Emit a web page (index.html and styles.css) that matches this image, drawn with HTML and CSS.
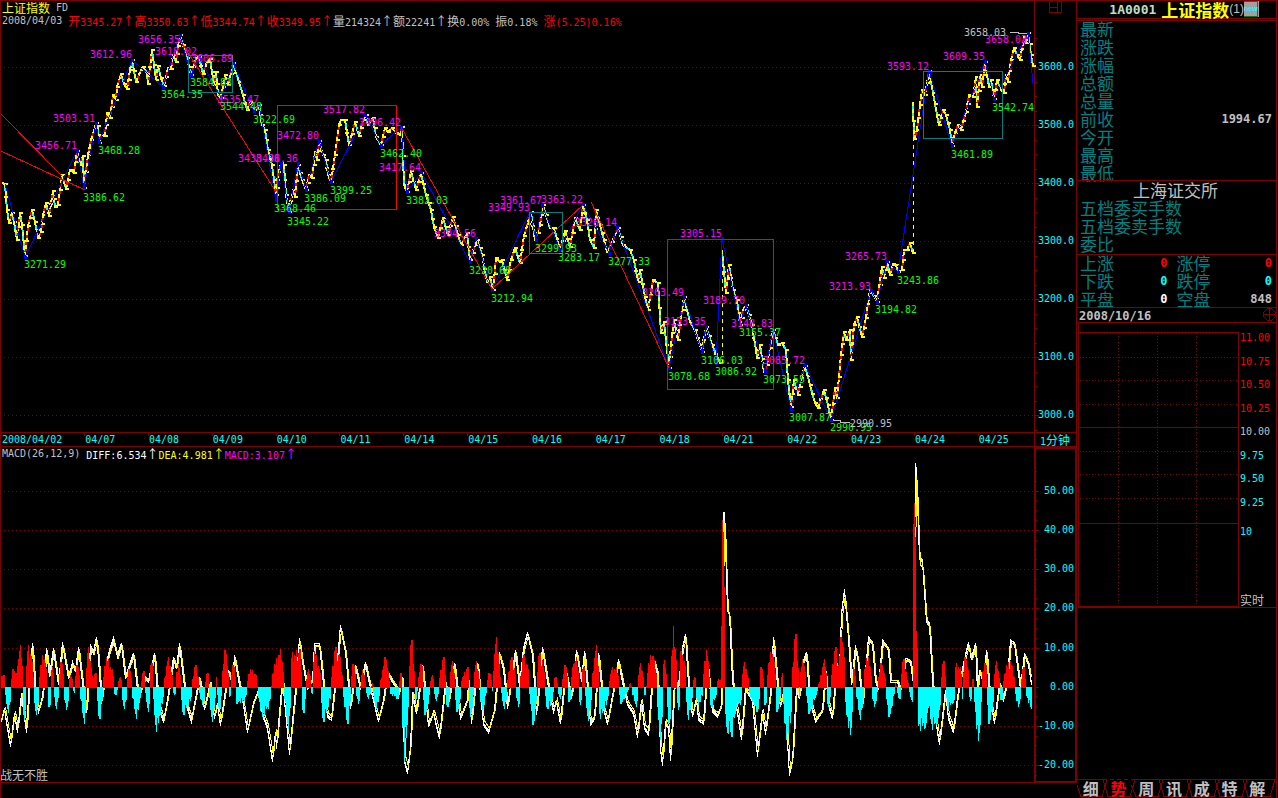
FILE: index.html
```html
<!DOCTYPE html>
<html lang="zh-CN">
<head>
  <meta charset="UTF-8">
  <meta name="viewport" content="width=device-width, initial-scale=1.0">
  <title>上证指数</title>
  <link rel="stylesheet" href="styles.css">
</head>
<body>
  <div class="app">
    <main class="charts">
      <header class="chart-head">
        <div class="info">
          <div class="line"><span class="yellow">上证指数</span><span class="num space">FD</span></div>
          <div class="line">
            <span class="num date">2008/04/03</span>
            <span class="red">开<b class="num">3345.27</b>↑高<b class="num">3350.63</b>↑低<b class="num">3344.74</b>↑收<b class="num">3349.95</b>↑</span>
            <span>量<b class="num">214324</b>↑额<b class="num">22241</b>↑换<b class="num">0.00%</b></span>
            <span class="space">振<b class="num">0.18%</b></span>
            <span class="red space">涨<b class="num">(5.25)0.16%</b></span>
          </div>
        </div>
        <div class="corner">
          <svg class="layout-icon" width="13" height="12" viewBox="0 0 13 12">
            <path d="M0.5 0V11.5H12.5V0.5H8.5V11M0 6.5H8M0 0.5H4"/>
          </svg>
        </div>
      </header>

      <svg id="price" class="chart" viewBox="1 28 1076 404"></svg>

      <div class="dates">
        <ol id="dateList"></ol>
        <div class="period"><span class="num">1</span>分钟</div>
      </div>

      <div class="legend">
        <div class="line">
          <span class="num">MACD(26,12,9)</span>
          <span class="white space"><b class="num">DIFF:6.534</b>↑</span>
          <span class="yellow"><b class="num">DEA:4.981</b>↑</span>
          <span class="magenta"><b class="num">MACD:3.107</b>↑</span>
        </div>
        <div class="legend-axis"></div>
      </div>

      <svg id="macd" class="chart" viewBox="1 461 1076 322"></svg>
    </main>

    <aside class="side">
      <h1 class="stock">
        <span class="code">1A0001</span>
        <span class="yellow">上证指数</span><span class="code-no">(1)</span>
        <svg width="15" height="16" viewBox="0 0 15 16">
          <path class="ic-face" d="M0 0H15V16H0Z"/>
          <path class="ic-edge" d="M0 0.5H14M13.5 0V15.5H0"/>
          <text class="ic-new" x="0" y="10">new</text>
        </svg>
      </h1>
      <dl class="quotes">
        <dt>最新</dt><dd></dd>
        <dt>涨跌</dt><dd></dd>
        <dt>涨幅</dt><dd></dd>
        <dt>总额</dt><dd></dd>
        <dt>总量</dt><dd></dd>
        <dt>前收</dt><dd>1994.67</dd>
        <dt>今开</dt><dd></dd>
        <dt>最高</dt><dd></dd>
        <dt>最低</dt><dd></dd>
      </dl>
      <section class="orders">
        <h2>上海证交所</h2>
        <p>五档委买手数</p>
        <p>五档委卖手数</p>
        <p>委比</p>
      </section>
      <dl class="breadth">
        <dt>上涨</dt><dd class="red">0</dd><dt>涨停</dt><dd class="red">0</dd>
        <dt>下跌</dt><dd class="cyan">0</dd><dt>跌停</dt><dd class="cyan">0</dd>
        <dt>平盘</dt><dd class="white">0</dd><dt>空盘</dt><dd>848</dd>
      </dl>
      <div class="day">
        <span>2008/10/16</span>
        <svg width="13" height="13" viewBox="0 0 13 13">
          <path d="M4.500 0.500H8.500L12.500 4.500V8.500L8.500 12.500H4.500L0.500 8.500V4.500ZM6.500 0V13M0 6.500H13"/>
        </svg>
      </div>
      <svg id="mini" class="mini" viewBox="1077 323 199 285"></svg>
      <div class="filler"></div>
      <nav class="tabs">
        <svg class="tab-lines" viewBox="0 0 199 19" preserveAspectRatio="none">
          <path d="M0 0.500H26M56 0.500H199"/>
          <path class="dashed" d="M26 0.500H56"/>
          <path d="M0 6L4 17.500H25L30 1M26 1L31 17.500H53L58 1M54 6L59 17.500H81L86 1M82 1L87 17.500H109L114 1M110 1L115 17.500H137L142 1M138 1L143 17.500H165L170 1M166 1L171 17.500H193L198 1"/>
        </svg>
        <button>细</button>
        <button class="active">势</button>
        <button>周</button>
        <button>讯</button>
        <button>成</button>
        <button>特</button>
        <button>解</button>
      </nav>
    </aside>
  </div>
  <script src="script.js"></script>
</body>
</html>
```

FILE: styles.css
```css
* {
  box-sizing: border-box;
}

body {
  margin: 0;
  background: #000;
  color: #c0c0c0;
  font-family: "Noto Sans CJK SC", sans-serif;
  font-size: 12px;
  line-height: 13px;
}

.app {
  display: grid;
  grid-template-columns: 1fr 201px;
  min-height: 100vh;
}

/* Colors */
.red { color: #ff0000; }
.yellow { color: #ffff00; }
.cyan { color: #00ffff; }
.magenta { color: #ff00ff; }
.white { color: #ffffff; }

.num {
  font-family: "DejaVu Sans Mono", monospace;
  font-size: 10px;
  font-weight: normal;
}

.space {
  margin-left: 6px;
}

/* Charts */
.charts {
  border-left: 1px solid #800000;
  border-top: 1px solid #800000;
}

.chart-head,
.dates,
.legend {
  display: grid;
  grid-template-columns: 1033fr 43fr;
}

.info {
  height: 27px;
  padding-left: 1px;
}

.line {
  display: flex;
  white-space: nowrap;
  height: 13px;
  line-height: 13px;
}

.date {
  margin-right: 6px;
}

.corner,
.legend-axis {
  border-left: 1px solid #800000;
  border-right: 1px solid #800000;
}

.legend-axis {
  border-width: 2px;
  border-top: 2px solid #800000;
}

.layout-icon {
  display: block;
  margin-left: 14px;
}

.layout-icon path,
.day path,
.tab-lines path {
  fill: none;
  stroke: #800000;
  shape-rendering: crispEdges;
}

.chart,
.mini {
  display: block;
  width: 100%;
  height: auto;
}

.dates {
  border-top: 1px solid #800000;
  border-bottom: 1px solid #800000;
  height: 15px;
  color: #00ffff;
}

.dates ol {
  display: grid;
  grid-template-columns: 8.05% repeat(14, 6.18%) 1fr;
  margin: 0;
  padding: 0;
  list-style: none;
}

.dates li {
  padding-left: 1px;
  font-family: "DejaVu Sans Mono", monospace;
  font-size: 10px;
  white-space: nowrap;
  background: linear-gradient(#800000, #800000) 0 0 / 1px 3px no-repeat;
}

.period {
  padding-left: 5px;
  white-space: nowrap;
  border-left: 1px solid #800000;
  border-right: 1px solid #800000;
}

.legend {
  height: 14px;
}

.legend .line {
  padding-left: 1px;
}

/* Chart drawing */
svg path,
svg line,
svg rect,
svg polyline {
  fill: none;
  shape-rendering: crispEdges;
}

svg text {
  font-family: "DejaVu Sans Mono", "Noto Sans CJK SC", monospace;
  font-size: 10px;
}

svg .note {
  font-family: "Noto Sans CJK SC", sans-serif;
  font-size: 12px;
}

.s-frame { stroke: #800000; }
.s-thick { stroke: #800000; stroke-width: 2; }
.s-grid { stroke: #800000; stroke-dasharray: 1 3; }
.s-dots { stroke: #800000; stroke-dasharray: 1 2; }
.s-trend { stroke: #ff0000; }
.s-box { stroke: #008080; }
.s-wave { stroke: #0000ff; }
.s-up { stroke: #ff0000; stroke-width: 2; }
.s-down { stroke: #00ffff; stroke-width: 2; }
.s-tick { stroke: #ffff00; stroke-width: 2; stroke-dasharray: 4 3; }
.s-cap { stroke: #ffff00; stroke-width: 2; }
.s-gap { stroke: #ffff00; stroke-dasharray: 4 4; }
.s-node { stroke: #0000ff; stroke-width: 3; }
.s-lead { stroke: #c0c0c0; }
.s-diff { stroke: #ffffff; }
.s-dea { stroke: #ffff00; }
.s-plus { stroke: #ff0000; }
.s-minus { stroke: #00ffff; }

.t-high { fill: #ff00ff; }
.t-low { fill: #00ff00; }
.t-axis { fill: #00ffff; }
.t-red { fill: #ff0000; }
.t-plain { fill: #c0c0c0; }

/* Side panel */
.side {
  display: flex;
  flex-direction: column;
  margin-right: 1px;
  border-top: 1px solid #800000;
  border-right: 1px solid #800000;
  font-size: 17px;
  line-height: 18px;
}

.side h1,
.side h2,
.side p,
.side dl,
.side dd {
  margin: 0;
  font-size: 17px;
  font-weight: normal;
}

.side dt,
.side p {
  color: #008080;
  white-space: nowrap;
}

.side .stock {
  display: flex;
  justify-content: flex-end;
  height: 20px;
  padding-right: 17px;
  line-height: 17px;
  font-weight: bold;
  border-bottom: 3px double #800000;
}

.code {
  margin-right: 5px;
  font-family: "DejaVu Sans Mono", monospace;
  font-size: 13px;
  color: #c0dcc0;
}

.code-no {
  font-family: "Liberation Sans", sans-serif;
  font-size: 12px;
  font-weight: normal;
}

.stock .ic-face { fill: #a0a0a4; }
.stock .ic-edge { stroke: #008000; }

.stock .ic-new {
  fill: #00ffff;
  font-family: "Liberation Sans", sans-serif;
  font-size: 7px;
  font-weight: bold;
}

.quotes {
  display: grid;
  grid-template-columns: auto 1fr;
  grid-auto-rows: 18px;
  height: 159px;
  padding: 0 4px 0 3px;
}

.quotes dt {
  line-height: 15px;
}

.quotes dd {
  line-height: 17px;
}

.side dd,
.day {
  font-family: "DejaVu Sans Mono", monospace;
  font-size: 12px;
  font-weight: bold;
}

.side dd {
  text-align: right;
}

.orders {
  height: 74px;
  padding-left: 3px;
  border-top: 1px solid #800000;
}

.orders h2 {
  padding-right: 5px;
  line-height: 18px;
  text-align: center;
}

.orders p {
  line-height: 18px;
}

.breadth {
  display: grid;
  grid-template-columns: 34px 1fr 43px 1fr;
  grid-auto-rows: 18px;
  height: 53px;
  padding: 0 4px 0 3px;
  line-height: 17px;
  border-top: 1px solid #800000;
}

.breadth dt {
  line-height: 15px;
}

.breadth dt:nth-of-type(even) {
  padding-left: 5px;
}

.breadth dd:nth-of-type(odd) {
  padding-right: 4px;
}

.day {
  display: flex;
  justify-content: space-between;
  height: 16px;
  padding-left: 2px;
  line-height: 16px;
  border-top: 1px solid #800000;
  border-bottom: 1px solid #800000;
}

.filler {
  flex: 1;
}

.tabs {
  position: relative;
  display: flex;
  height: 19px;
  padding-right: 5px;
}

.tab-lines {
  position: absolute;
  width: 199px;
  height: 19px;
}

.tab-lines .dashed {
  stroke-dasharray: 4 3;
}

.tabs button {
  position: relative;
  flex: 1;
  padding: 0;
  border: none;
  background: none;
  color: #c0c0c0;
  font-family: inherit;
  font-size: 16px;
  font-weight: bold;
  line-height: 17px;
  cursor: pointer;
}

.tabs .active {
  color: #ff0000;
}
```

FILE: script.js
```js
const NS = "http://www.w3.org/2000/svg";
const price = document.getElementById("price");
const macd = document.getElementById("macd");
const mini = document.getElementById("mini");

function add(svg, tag, cls, attrs, text) {
  const el = document.createElementNS(NS, tag);
  el.setAttribute("class", cls);
  for (const key in attrs) el.setAttribute(key, attrs[key]);
  if (text) el.textContent = text;
  svg.appendChild(el);
}

function path(svg, cls, d) {
  add(svg, "path", cls, { d: d });
}

function hline(svg, cls, x1, x2, y) {
  path(svg, cls, `M${x1} ${y + 0.5}H${x2}`);
}

function vline(svg, cls, x, y1, y2) {
  path(svg, cls, `M${x + 0.5} ${y1}V${y2}`);
}

function label(svg, cls, x, y, text, anchor) {
  add(svg, "text", cls, { x: x, y: y + 4, "text-anchor": anchor || "start" }, text);
}

function parse(str) {
  return str.trim().split(/\s+/).map(p => p.split(",").map(Number));
}

// dates
["2008/04/02", "04/07", "04/08", "04/09", "04/10", "04/11", "04/14", "04/15", "04/16",
 "04/17", "04/18", "04/21", "04/22", "04/23", "04/24", "04/25"].forEach(d => {
  const li = document.createElement("li");
  li.textContent = d;
  document.getElementById("dateList").appendChild(li);
});

// price grid and axis
for (let i = 0; i < 7; i++) {
  const y = 67 + i * 58;
  hline(price, "s-grid", 4, 1034, y);
  hline(price, "s-frame", 1034, 1039, y);
  label(price, "t-axis", 1074, y - 1, (3600 - i * 100) + ".0", "end");
}
for (let y = 38; y < 430; y += 14.5) {
  hline(price, "s-frame", 1035, 1037, Math.round(y));
}
vline(price, "s-frame", 1034, 28, 432);
vline(price, "s-frame", 1076, 28, 432);

const ticks = parse(`
2,183 5,184 7,210 9,223 12,213 14,222 17,240 20,213 22,225 25,256 28,226 32,210 35,222 38,238 41,232 43,215
46,203 49,216 53,191 55,207 58,205 62,175 66,189 70,170 74,173 77,151 80,165 83,156 84,188 88,155 91,140
95,128 96,123 98,126 99,143 101,135 105,136 107,113 110,118 113,95 116,100 117,87 121,74 124,84 127,89
130,70 132,60 136,82 141,70 143,67 147,73 148,84 152,50 156,80 158,66 161,78 164,86 168,68 171,69 173,55
176,62 178,46 180,35 183,45 187,58 191,75 196,58 199,57 203,74 207,62 210,59 214,85 216,72 218,95 221,98
225,75 228,85 233,63 239,82 243,95 247,110 250,102 254,110 259,105 262,125 265,130 268,150 272,165 276,195
277,180 281,163 284,165 286,195 289,212 293,190 295,197 298,165 302,180 306,190 309,175 312,178 315,152
317,160 319,141 323,155 326,160 328,175 331,182 335,155 339,125 341,120 345,120 349,145 355,122 359,136
363,120 366,115 368,125 373,118 376,137 381,145 385,128 388,132 392,128 396,133 400,135 402,127 404,185
407,192 411,171 416,190 421,173 426,195 431,210 434,227 438,238 443,218 448,235 453,217 458,235 461,245
467,233 470,260 475,245 477,240 482,255 487,282 490,277 493,290 496,258 500,262 502,260 507,280 511,260
515,248 520,263 524,236 531,212 535,240 540,225 543,205 546,215 550,228 554,228 560,250 565,231 570,247
575,218 580,230 583,205 587,220 590,240 594,248 596,210 600,225 604,240 607,252 612,242 618,228 623,245
630,250 634,260 638,282 640,270 645,297 648,310 653,280 658,283 661,333 664,322 669,368 671,345 674,320
678,340 682,310 684,297 690,322 695,330 700,345 702,352 706,327 712,345 720,363 722,250 726,293 729,265
733,290 737,300 740,325 743,310 746,305 752,325 756,350 757,358 760,345 764,372 767,365 773,330 778,345
782,343 786,350 788,380 791,407 794,380 798,395 801,378 805,366 810,385 815,403 818,408 824,390 828,405
831,420 835,388 837,398 841,355 844,332 846,340 850,330 851,360 854,325 857,317 862,337 866,318 870,290
874,296 877,302 882,267 884,278 887,262 890,275 893,264 896,265 898,272 902,270 904,250 907,250 910,243
913,253 913,102 914,139 917,130 920,105 922,90 925,95 929,71 933,93 937,115 939,125 943,110 946,115
950,130 952,146 955,133 958,125 961,130 966,112 969,95 973,97 976,77 977,107 980,75 982,87 985,62 989,87
991,80 994,99 997,80 1001,90 1004,93 1006,75 1008,82 1011,60 1014,48 1017,55 1020,60 1024,37 1026,43
1028,33 1031,55 1033,66`);

const wave = parse(`
5,184 25,257 77,151 84,188 96,123 99,142 132,60 163,87 180,35 191,75 199,57 221,98 233,63 254,111 259,105
276,200 281,163 289,212 298,163 306,190 319,141 331,182 365,115 381,145 401,127 407,192 421,172 470,262
476,238 492,290 530,212 536,240 542,205 560,250 583,204 609,253 617,227 669,368 684,297 702,352 706,326
716,363 722,238 740,324 746,305 765,371 773,330 791,409 805,365 831,420 871,290 877,302 887,261 898,272
929,71 952,146 985,61 994,99 1028,33 1033,83`);

// price ticks
for (let i = 1; i < ticks.length; i++) {
  const [x1, y1] = ticks[i - 1];
  const [x2, y2] = ticks[i];
  const d = `M${x1} ${y1}L${x2} ${y2}`;
  if (Math.abs(y2 - y1) > 90) {
    path(price, "s-gap", `M${x2 + 0.5} ${y1}V${y2}`);
    continue;
  }
  path(price, y2 < y1 ? "s-up" : "s-down", d);
  path(price, "s-tick", d);
  path(price, "s-cap", `M${x2 - 1} ${y2}h4`);
  if (Math.abs(y2 - y1) > 14) {
    const mx = Math.round((x1 + x2) / 2);
    const my = Math.round((y1 + y2) / 2);
    path(price, "s-cap", `M${mx - 2 + i % 2} ${my}h4`);
  }
}

add(price, "polyline", "s-wave", { points: wave.join(" ") });
wave.slice(1, -1).forEach(([x, y]) => path(price, "s-node", `M${x - 1} ${y}h3`));

// trend lines
["M1 114L62 176", "M1 151L85 190", "M180 40L276 192", "M401 127L492 289L583 205", "M591 202L669 368"]
  .forEach(d => path(price, "s-trend", d));

// consolidation boxes
[["s-box", 188, 55, 44, 37], ["s-trend", 277, 105, 119, 104], ["s-box", 529, 212, 33, 41],
 ["s-trend", 667, 239, 106, 150], ["s-box", 923, 71, 79, 67]].forEach(([cls, x, y, w, h]) => {
  add(price, "rect", cls, { x: x + 0.5, y: y + 0.5, width: w, height: h });
});

const highs = [[90, 54, "3612.96"], [138, 39, "3656.35"], [155, 51, "3618.02"], [191, 58, "3606.89"],
  [53, 118, "3503.31"], [35, 145, "3456.71"], [217, 99, "3535.47"], [323, 109, "3517.82"],
  [277, 135, "3472.80"], [238, 158, "3438.36"], [256, 158, "3438.36"], [359, 122, "3496.42"],
  [379, 167, "3417.64"], [500, 200, "3361.67"], [488, 207, "3349.93"], [541, 199, "3363.22"],
  [575, 222, "3328.14"], [434, 233, "3304.56"], [680, 233, "3305.15"], [642, 292, "3203.49"],
  [664, 321, "3153.35"], [703, 300, "3189.70"], [731, 323, "3148.83"], [763, 360, "3085.72"],
  [829, 286, "3213.93"], [845, 256, "3265.73"], [887, 66, "3593.12"], [943, 56, "3609.35"],
  [985, 39, "3658.03"]];
const lows = [[162, 94, "3564.35"], [191, 82, "3584.83"], [221, 106, "3544.48"], [254, 119, "3522.69"],
  [99, 150, "3468.28"], [84, 197, "3386.62"], [25, 264, "3271.29"], [275, 208, "3368.46"],
  [288, 221, "3345.22"], [305, 198, "3386.09"], [331, 190, "3399.25"], [381, 153, "3462.40"],
  [407, 200, "3382.03"], [536, 248, "3299.93"], [559, 257, "3283.17"], [609, 261, "3277.33"],
  [470, 270, "3220.68"], [492, 298, "3212.94"], [669, 376, "3078.68"], [702, 360, "3106.03"],
  [716, 371, "3086.92"], [740, 332, "3155.37"], [764, 379, "3073.55"], [790, 417, "3007.87"],
  [831, 427, "2990.95"], [876, 309, "3194.82"], [898, 280, "3243.86"], [952, 154, "3461.89"],
  [993, 107, "3542.74"]];
highs.forEach(([x, y, t]) => label(price, "t-high", x, y, t));
lows.forEach(([x, y, t]) => label(price, "t-low", x - 1, y, t));

label(price, "t-plain", 964, 32, "3658.03");
label(price, "t-plain", 850, 423, "2990.95");
path(price, "s-lead", "M1010 32.5H1018V33.5H1027");
path(price, "s-lead", "M833 420.5H840V422.5H850");

// MACD grid and axis
const zero = 687;
const levels = [491, 530, 569, 608, 648, 687, 726, 765];
levels.forEach((y, i) => {
  hline(macd, "s-grid", 4, 1034, y);
  hline(macd, "s-frame", 1034, 1039, y);
  label(macd, "t-axis", 1074, y - 1, (50 - i * 10).toFixed(2), "end");
});
for (let y = 471; y < 780; y += 9.8) {
  hline(macd, "s-frame", 1036, 1037, Math.round(y));
}

const diff = parse(`
1,720 4,708 7,727 10,745 14,713 17,731 21,693 26,731 30,663 32,643 35,697 38,710 42,697 46,648 49,675
53,648 58,683 62,642 68,677 72,662 75,670 78,647 83,690 86,711 90,645 93,652 96,637 98,657 101,702 106,663
109,650 113,638 117,655 121,643 125,677 133,653 138,697 145,677 148,680 154,653 158,703 163,721 167,700
173,657 176,667 179,643 183,677 187,707 191,720 199,677 204,708 210,682 214,717 217,703 220,724 228,670
232,682 234,655 238,678 243,703 247,731 253,703 258,690 262,713 267,727 272,760 275,732 276,747 279,713
282,677 289,753 295,690 299,638 302,660 307,687 312,680 314,643 319,643 323,683 327,715 331,718 336,670
340,625 345,650 350,707 355,665 360,688 365,662 369,682 378,720 383,700 387,672 395,685 398,695 402,677
404,760 407,772 410,747 412,692 416,712 422,665 428,725 433,712 439,737 445,682 448,703 454,663 460,717
467,700 468,680 471,722 477,663 483,723 488,731 494,710 499,652 503,668 507,707 511,678 515,650 519,685
523,648 527,632 532,653 536,713 542,647 547,680 553,710 556,700 560,722 565,670 571,697 576,650 581,680
584,651 590,723 594,717 598,653 603,707 607,723 613,690 618,659 622,680 627,703 633,712 637,736 641,700
644,727 648,733 653,658 657,672 660,747 662,764 665,722 668,727 670,759 674,680 678,685 682,648 685,634
688,683 692,715 696,698 698,718 703,722 707,663 712,710 717,715 721,705 723,512 724,512 727,608 729,613
732,680 736,705 741,738 745,687 752,700 757,755 762,710 765,733 770,693 773,637 777,683 780,705 784,687
787,740 789,774 792,760 796,687 799,697 802,663 806,652 809,697 815,720 822,710 825,670 828,703 832,717
836,663 839,668 841,613 844,589 848,637 851,683 855,645 858,663 862,705 868,637 872,642 875,680 878,687
882,640 888,648 890,680 897,680 900,690 905,658 910,660 913,683 915,463 916,470 919,557 922,560 926,620
929,623 932,680 935,717 939,743 945,690 948,717 953,731 957,697 963,663 968,642 971,658 975,643 977,690
979,670 983,680 986,650 989,693 994,722 999,683 1003,700 1007,677 1010,640 1014,642 1020,687 1024,653
1028,663 1031,683`);

const hist = parse(`
1,10 3,12 8,-26 13,18 17,10 20,42 24,-33 28,42 31,25 36,-28 42,32 45,20 49,-20 52,20 56,-22 61,25 66,-23
70,12 74,-6 77,22 84,-37 88,40 91,8 95,14 99,-32 106,30 112,15 115,-8 120,10 124,-22 129,18 136,-32 143,16
148,-25 151,24 156,-45 162,-12 168,30 174,-8 178,22 183,-28 190,-12 195,22 202,-18 207,14 212,-35 216,10
219,-22 225,37 229,-10 233,22 237,-17 244,-14 250,18 255,12 262,-30 268,-20 274,20 280,38 288,-42 292,34
299,38 303,-26 308,18 312,-7 314,36 319,14 323,-35 330,-8 335,40 339,30 347,-37 353,23 358,-17 362,17
368,-12 372,4 376,-22 385,30 390,-6 397,-12 401,14 404,-75 407,-20 411,47 415,-12 421,23 425,-28 432,12
436,-14 443,30 447,-20 452,26 457,-25 462,8 467,20 470,-30 476,26 482,-23 489,14 492,-4 496,50 499,10
504,-22 511,30 514,14 518,-20 523,32 527,18 533,-38 539,34 542,24 547,-22 550,-18 555,10 560,-12 565,22
569,-15 573,20 576,30 580,-18 583,20 588,-34 596,42 600,-32 606,-15 612,20 616,20 621,-17 630,4 636,-20
640,24 645,-8 650,32 653,30 657,-4 660,-53 664,27 669,-36 673,61 678,-23 681,36 685,16 688,-33 694,10
698,-18 702,-6 706,37 711,-20 715,-8 718,8 720,6 722,167 723,155 724,100 725,-10 727,-45 731,-50 735,-20
740,-18 744,25 750,-8 757,-25 761,20 765,-18 770,35 773,28 777,-25 782,14 786,-53 790,-30 795,53 799,-10
802,28 805,8 809,-27 815,-8 820,6 824,28 828,-20 835,40 838,8 841,50 843,30 846,-22 850,-48 853,20 860,-33
866,28 868,30 874,-20 881,24 885,4 889,-30 895,4 899,-12 903,28 906,8 912,-15 913,163 914,184 915,150
916,56 918,-35 920,-44 925,-40 928,-12 932,-43 937,-35 940,-10 943,26 948,-22 953,-14 956,24 960,18 962,-12
965,30 968,10 970,-14 973,8 978,-54 982,10 985,24 989,-37 993,-8 996,26 1001,-13 1006,20 1010,26 1014,4
1018,-20 1023,20 1026,-6 1031,-22`);

function valueAt(points, x) {
  let i = 1;
  while (i < points.length - 1 && points[i][0] < x) i++;
  const [x1, y1] = points[i - 1];
  const [x2, y2] = points[i];
  return y1 + (y2 - y1) * (x - x1) / (x2 - x1);
}

// DEA follows DIFF one bar later
let diffLine = "", deaLine = "";
for (let x = 1; x <= 1031; x++) {
  const y = Math.round(valueAt(diff, x));
  const prev = valueAt(diff, Math.max(1, x - 1));
  const dea = Math.round(zero + (prev - zero) * 0.94);
  diffLine += `${x + 0.5},${y} `;
  deaLine += `${x + 0.5},${dea} `;
}
add(macd, "polyline", "s-diff", { points: diffLine });
add(macd, "polyline", "s-diff", { points: diffLine, transform: "translate(0 2)" });
add(macd, "polyline", "s-dea", { points: deaLine });

for (let x = 1; x <= 1031; x++) {
  let v = valueAt(hist, x);
  // same-side neighbours fill out the cluster
  if (Math.abs(v) < 60) {
    [x - 1, x + 1].forEach(n => {
      const near = valueAt(hist, Math.min(1031, Math.max(1, n)));
      if (near * v > 0 && Math.abs(near) < 60 && Math.abs(near) > Math.abs(v)) v = near;
    });
  }
  const onPeak = hist.some(p => p[0] === x);
  if (!onPeak) v *= [1, 0.7, 0.9, 0.85][x % 4];
  v = Math.round(v) || 1;
  vline(macd, v > 0 ? "s-plus" : "s-minus", x, v > 0 ? zero + 1 : zero, zero - v);
}

vline(macd, "s-thick", 1034.5, 461, 782);
vline(macd, "s-thick", 1075.5, 461, 783);
hline(macd, "s-frame", 1, 1034, 782);
path(macd, "s-thick", "M1034 782H1077");
add(macd, "text", "note t-plain", { x: 0, y: 780 }, "战无不胜");

// intraday chart in the side panel
vline(mini, "s-frame", 1078, 323, 607);
vline(mini, "s-frame", 1238, 332, 607);
[1118, 1157, 1196].forEach(x => vline(mini, "s-dots", x, 333, 606));
[333, 357, 380, 404, 451, 474, 498].forEach(y => hline(mini, "s-dots", 1080, 1238, y));
[332, 427, 523].forEach(y => hline(mini, "s-frame", 1078, 1239, y));
path(mini, "s-thick", "M1078 607H1239");
hline(mini, "s-frame", 1238, 1276, 607);
[["t-red", 337, "11.00"], ["t-red", 361, "10.75"], ["t-red", 384, "10.50"], ["t-red", 408, "10.25"],
 ["t-plain", 431, "10.00"], ["t-axis", 455, "9.75"], ["t-axis", 478, "9.50"], ["t-axis", 502, "9.25"],
 ["t-axis", 531, "10"]].forEach(([cls, y, t]) => label(mini, cls, 1240, y, t));
add(mini, "text", "note t-plain", { x: 1240, y: 605 }, "实时");
```
